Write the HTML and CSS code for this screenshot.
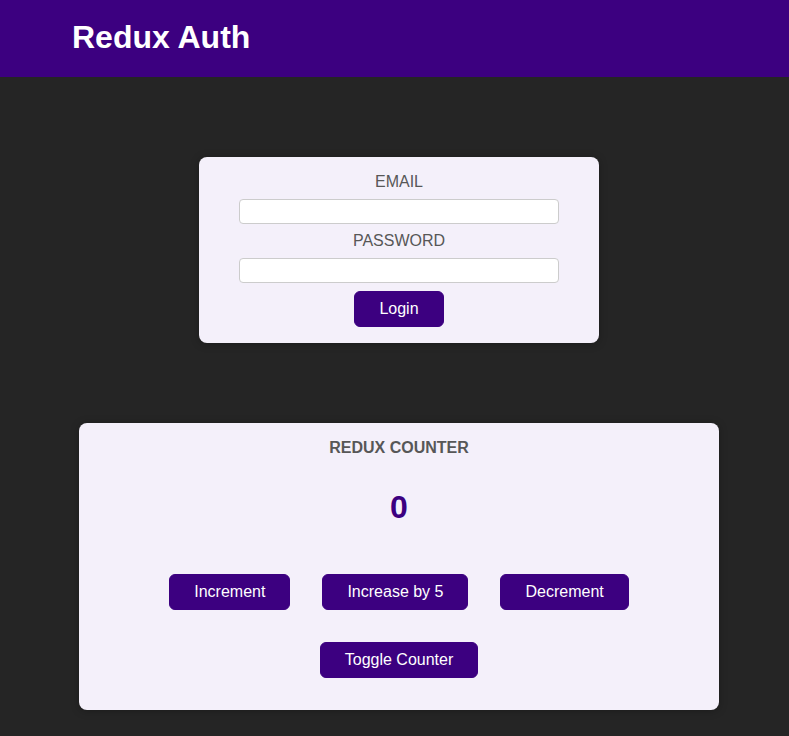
FILE: index.html
```html
<!DOCTYPE html>
<html lang="en">
<head>
<meta charset="utf-8">
<meta name="viewport" content="width=device-width, initial-scale=1">
<title>Redux Auth</title>
<link rel="stylesheet" href="styles.css">
</head>
<body>
<header class="header">
  <h1>Redux Auth</h1>
</header>
<main class="content">
  <section class="card auth">
    <form>
      <div class="control">
        <label for="email">Email</label>
        <input type="email" id="email">
      </div>
      <div class="control">
        <label for="password">Password</label>
        <input type="password" id="password">
      </div>
      <button type="button">Login</button>
    </form>
  </section>
  <section class="card counter">
    <h2>Redux Counter</h2>
    <div class="value">0</div>
    <div class="actions">
      <button type="button">Increment</button>
      <button type="button">Increase by 5</button>
      <button type="button">Decrement</button>
    </div>
    <button type="button">Toggle Counter</button>
  </section>
</main>
</body>
</html>
```

FILE: styles.css
```css
* {
  box-sizing: border-box;
}

body {
  margin: 0;
  background: #252525;
  color: #575757;
  font-family: "Liberation Sans", Arial, sans-serif;
  font-size: 16px;
}

.header {
  padding: 19px 72px 22px;
  background: #3c0080;
  color: #fff;
}

.header h1 {
  margin: 0;
  font-size: 32px;
  line-height: 36px;
}

.content {
  display: flex;
  flex-direction: column;
  align-items: center;
  gap: 80px;
  padding: 80px 0 24px 9px;
}

.card {
  max-width: 90%;
  padding: 16px;
  border-radius: 8px;
  background: #f4f0fa;
  box-shadow: 0 1px 8px rgba(0, 0, 0, 0.26);
  text-align: center;
}

.auth {
  width: 400px;
}

.control {
  margin-bottom: 8px;
}

.control label {
  display: block;
  margin-bottom: 8px;
  line-height: 18px;
  text-transform: uppercase;
}

.control input {
  display: block;
  width: 320px;
  max-width: 100%;
  margin: 0 auto;
  padding: 4px;
  border: 1px solid #ccc;
  border-radius: 4px;
  font: 13px/15px "Liberation Sans", Arial, sans-serif;
}

button {
  padding: 8px 24px;
  border: 1px solid #3c0080;
  border-radius: 6px;
  background: #3c0080;
  color: #fff;
  font: inherit;
  line-height: 18px;
  cursor: pointer;
}

button:hover {
  background: #5a17ac;
}

.counter {
  width: 640px;
  padding-bottom: 32px;
}

.counter h2 {
  margin: 0;
  font-size: 16px;
  line-height: 18px;
  text-transform: uppercase;
}

.value {
  margin: 32px 0 48px;
  color: #3c0080;
  font-size: 32px;
  font-weight: bold;
  line-height: 37px;
}

.actions {
  display: flex;
  flex-wrap: wrap;
  justify-content: center;
  gap: 32px;
  margin-bottom: 32px;
}
```
